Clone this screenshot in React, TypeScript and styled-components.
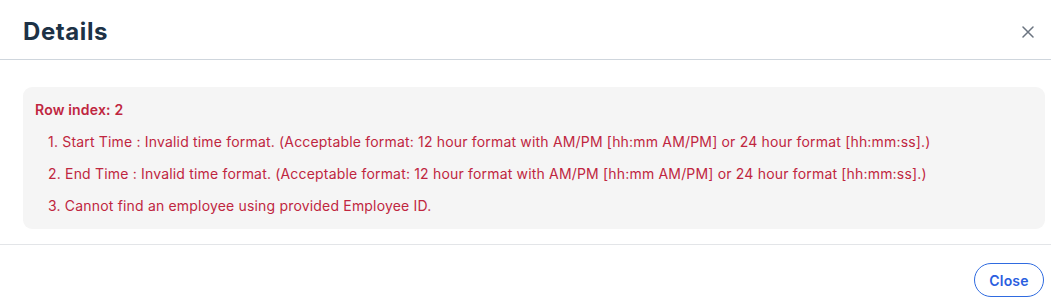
import React from "react";
import styled, { createGlobalStyle } from "styled-components";

const Global = createGlobalStyle`
  body {
    margin: 0;
    background: #ffffff;
    font-family: Inter, "Noto Sans", sans-serif;
  }
`;

const Modal = styled.div`
  width: 1051px;
  height: 299px;
  background: #ffffff;
  display: flex;
  flex-direction: column;
`;

const Header = styled.div`
  height: 60px;
  border-bottom: 1px solid #cfd6dd;
  display: flex;
  align-items: center;
  justify-content: space-between;
  padding: 0 13px 0 23px;
  box-sizing: border-box;
`;

const Title = styled.h2`
  margin: 0;
  font-size: 24px;
  font-weight: 700;
  color: #1d3246;
  padding-top: 4px;
  letter-spacing: 0.6px;
`;

const CloseIcon = styled.button`
  border: 0;
  background: none;
  padding: 0;
  width: 20px;
  height: 20px;
  display: flex;
  align-items: center;
  justify-content: center;
  color: #6b7480;
  cursor: pointer;
  margin-top: 4px;
`;

const Body = styled.div`
  padding: 27px 6px 15px 23px;
  border-bottom: 1px solid #e3e5e8;
`;

const ErrorBox = styled.div`
  background: #f5f5f5;
  border-radius: 9px;
  padding: 14px 12px 15px 12px;
  color: #c0263f;
  letter-spacing: 0.18px;
`;

const RowLabel = styled.div`
  font-size: 14px;
  font-weight: 600;
  line-height: 18px;
  margin-bottom: 14px;
`;

const ErrorList = styled.ol`
  margin: 0;
  padding: 0 0 0 13px;
  list-style: none;
  display: flex;
  flex-direction: column;
  gap: 15px;
`;

const ErrorItem = styled.li`
  font-size: 14px;
  line-height: 17px;
`;

const Footer = styled.div`
  flex: 1;
  display: flex;
  justify-content: flex-end;
  align-items: flex-start;
  padding: 18px 7px 0 0;
`;

const CloseButton = styled.button`
  height: 34px;
  width: 70px;
  padding: 0;
  border: 1px solid #2f6be0;
  border-radius: 17px;
  background: #ffffff;
  color: #2a5ee0;
  font-family: Inter, sans-serif;
  font-size: 14px;
  font-weight: 600;
  letter-spacing: 0.2px;
  cursor: pointer;
`;

const errors = [
  "Start Time : Invalid time format. (Acceptable format: 12 hour format with AM/PM [hh:mm AM/PM] or 24 hour format [hh:mm:ss].)",
  "End Time : Invalid time format. (Acceptable format: 12 hour format with AM/PM [hh:mm AM/PM] or 24 hour format [hh:mm:ss].)",
  "Cannot find an employee using provided Employee ID.",
];

export default function App() {
  return (
    <>
      <Global />
      <Modal>
        <Header>
          <Title>Details</Title>
          <CloseIcon aria-label="close">
            <svg width="12" height="12" viewBox="0 0 12 12">
              <path d="M1 1 L11 11 M11 1 L1 11" stroke="currentColor" strokeWidth="1.5" strokeLinecap="round" />
            </svg>
          </CloseIcon>
        </Header>
        <Body>
          <ErrorBox>
            <RowLabel>Row index: 2</RowLabel>
            <ErrorList>
              {errors.map((e, i) => (
                <ErrorItem key={i}>
                  {i + 1}. {e}
                </ErrorItem>
              ))}
            </ErrorList>
          </ErrorBox>
        </Body>
        <Footer>
          <CloseButton>Close</CloseButton>
        </Footer>
      </Modal>
    </>
  );
}
